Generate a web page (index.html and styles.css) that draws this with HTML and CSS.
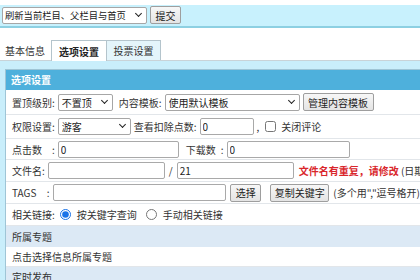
FILE: index.html
```html
<!DOCTYPE html>
<html>
<head>
<meta charset="utf-8">
<link rel="stylesheet" href="styles.css">
</head>
<body>
<div class="topbar">
  <span class="selw"><select class="sel sel-refresh"><option>刷新当前栏目、父栏目与首页</option></select></span>
  <button class="btn btn-submit">提交</button>
</div>
<div class="tabs">
  <div class="tab tab-plain">基本信息</div>
  <div class="tab tab-active">选项设置</div>
  <div class="tab tab-off">投票设置</div>
</div>
<div class="area">
  <div class="panel">
    <div class="phead">选项设置</div>
    <div class="row r1">
      <span class="lab">置顶级别:</span>
      <span class="selw ml3"><select class="sel w-top"><option>不置顶</option></select></span>
      <span class="lab ml6">内容模板:</span>
      <span class="selw ml3"><select class="sel w-tpl"><option>使用默认模板</option></select></span>
      <button class="btn btn-tpl">管理内容模板</button>
    </div>
    <div class="row r2">
      <span class="lab">权限设置:</span>
      <span class="selw ml3"><select class="sel w-perm"><option>游客</option></select></span>
      <span class="lab ml3">查看扣除点数:</span>
      <input class="inp w-pts" value="0">
      <span class="lab ml3">,</span>
      <input type="checkbox" class="chk">
      <span class="lab">关闭评论</span>
    </div>
    <div class="row r3">
      <span class="lab lab-w">点击数</span><span class="lab">:</span>
      <input class="inp w-click" value="0">
      <span class="lab lab-w2 ml7">下载数</span><span class="lab">:</span>
      <input class="inp w-down" value="0">
    </div>
    <div class="row r4">
      <span class="lab lab-w">文件名</span><span class="lab">:</span>
      <input class="inp w-click" value="">
      <span class="lab ml4">/</span>
      <input class="inp w-ext ml4" value="21">
      <span class="warn">文件名有重复，请修改</span><span class="lab">&nbsp;(日期</span>
    </div>
    <div class="row r5">
      <span class="lab lab-w3">TAGS</span><span class="lab">:</span>
      <input class="inp w-tags" value="">
      <button class="btn btn-pick">选择</button>
      <button class="btn btn-copy">复制关键字</button>
      <span class="lab ml4">(多个用","逗号格开)</span>
    </div>
    <div class="row r6">
      <span class="lab">相关链接:</span>
      <input type="radio" name="rl" class="rad" checked>
      <span class="lab">按关键字查询</span>
      <input type="radio" name="rl" class="rad rad2">
      <span class="lab">手动相关链接</span>
    </div>
    <div class="row r7 blue">所属专题</div>
    <div class="row r8">点击选择信息所属专题</div>
    <div class="row r9 blue">定时发布</div>
  </div>
</div>
</body>
</html>
```
FILE: styles.css
```css
* { box-sizing: border-box; }
html, body { margin: 0; padding: 0; background: #fff; }
body {
  font-family: "Noto Sans CJK SC", "Microsoft YaHei", sans-serif;
  font-size: 10px;
  color: #333;
  width: 420px;
  height: 280px;
  overflow: hidden;
  padding-top: 5px;
}
.topbar {
  background: #c8f1fd;
  height: 23px;
  border-bottom: 2px solid #8dd0e2;
  display: flex;
  align-items: center;
  padding-left: 2px;
  padding-bottom: 1px;
}
.selw {
  position: relative;
  display: inline-flex;
}
.selw::after {
  content: "";
  position: absolute;
  right: 6px;
  top: 4px;
  width: 4px;
  height: 4px;
  border-right: 1.5px solid #222;
  border-bottom: 1.5px solid #222;
  transform: rotate(45deg);
  pointer-events: none;
}
.sel {
  -webkit-appearance: none;
  appearance: none;
  font-family: inherit;
  font-size: 10px;
  height: 17px;
  padding: 0 14px 0 3px;
  border: 1px solid #a6a6a6;
  border-radius: 2px;
  background: #fff;
  color: #222;
}
.sel-refresh { width: 145px; font-size: 9.3px; padding-left: 2px; }
.btn {
  font-family: inherit;
  font-size: 10px;
  height: 18px;
  padding: 0;
  white-space: nowrap;
  border: 1px solid #9e9e9e;
  border-radius: 2px;
  background: linear-gradient(#f7f7f7, #e4e4e4);
  color: #222;
}
.btn-submit { margin-left: 3px; width: 31px; }
.btn-tpl { margin-left: 3px; width: 71px; }
.btn-pick { margin-left: 4px; width: 32px; }
.btn-copy { margin-left: 9px; width: 61px; }
.tabs {
  margin-top: 12px;
  height: 21px;
  display: flex;
  align-items: stretch;
  border-bottom: 1px solid #c9d3d8;
}
.tab {
  display: flex;
  align-items: center;
  justify-content: center;
  font-size: 10px;
  white-space: nowrap;
}
.tab-plain { width: 51px; justify-content: flex-start; padding-left: 5px; }
.tab-active {
  width: 56px;
  background: #fff;
  border: 1px solid #b4c4cc;
  border-bottom: none;
  font-weight: bold;
  color: #222;
  margin-bottom: -1px;
}
.tab-off {
  width: 54px;
  background: #e4f5fb;
  border: 1px solid #b4c4cc;
  border-left: none;
  border-bottom: none;
}
.area {
  background: #c9eefb;
  padding: 8px 0 0 5px;
  height: 230px;
}
.panel {
  border-left: 1px solid #9fc5d6;
  border-top: 1px solid #9fc5d6;
  background: #fff;
  height: 100%;
  overflow: hidden;
}
.phead {
  background: #4eb0dc;
  color: #fff;
  font-weight: bold;
  height: 20px;
  line-height: 20px;
  padding-left: 5px;
}
.row {
  display: flex;
  align-items: center;
  padding-left: 6px;
  border-bottom: 1px solid #e2e6ea;
  white-space: nowrap;
  height: 22px;
}
.r1 { height: 25px; }
.r2 { height: 24px; }
.r3 { height: 21px; }
.r7 { height: 21px; }
.r8 { height: 20px; }
.r9 { height: 20px; }
.blue { background: #dce9f5; border-bottom-color: #dce9f5; }
.lab { color: #333; }
.lab-w { width: 40px; }
.lab-w2 { width: 35px; }
.lab-w3 { width: 36px; }
.ml3 { margin-left: 3px; }
.ml4 { margin-left: 4px; }
.ml6 { margin-left: 6px; }
.ml7 { margin-left: 7px; }
.w-top { width: 55px; }
.w-tpl { width: 135px; }
.w-perm { width: 73px; }
.inp {
  font-family: inherit;
  font-size: 10px;
  height: 17px;
  border: 1px solid #a9a9a9;
  border-radius: 2px;
  padding: 0 2px;
  color: #222;
  background: #fff;
}
.w-pts { width: 54px; margin-left: 3px; }
.w-click { width: 121px; margin-left: 3px; }
.w-down { width: 123px; margin-left: 3px; }
.w-ext { width: 120px; }
.w-tags { width: 179px; margin-left: 3px; }
.chk { width: 11px; height: 11px; margin: 0 5px 0 6px; }
.rad { width: 11px; height: 11px; margin: 0 6px 0 5px; accent-color: #1a73e8; }
.rad2 { margin-left: 9px; }
.warn { color: #d9262b; font-weight: bold; margin-left: 5px; }
```
